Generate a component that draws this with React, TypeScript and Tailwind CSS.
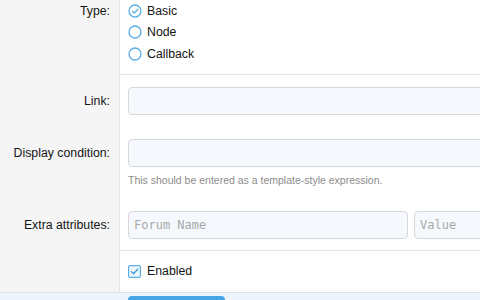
import React from "react";

const Radio = ({ checked }: { checked?: boolean }) => (
  <svg width="14" height="14" viewBox="0 0 14 14" className="shrink-0">
    <circle cx="7" cy="7" r="6" fill="white" stroke="#5aaee6" strokeWidth="1.3" />
    {checked && (
      <path d="M4.2 7.1 L6.2 9 L9.9 5.2" fill="none" stroke="#5aaee6" strokeWidth="1.3" strokeLinecap="round" strokeLinejoin="round" />
    )}
  </svg>
);

const Divider = () => (
  <div className="flex h-px shrink-0">
    <div className="w-[120px] bg-[#f5f5f5] border-r border-[#e4e4e4]" />
    <div className="flex-1 bg-[#e3e3e3]" />
  </div>
);

const mono = { fontFamily: '"DejaVu Sans Mono", "Liberation Mono", monospace', fontSize: 12 };

export default function App() {
  return (
    <div className="w-[480px] h-[300px] overflow-hidden bg-white flex flex-col" style={{ fontFamily: '"Liberation Sans", Arial, sans-serif' }}>
      {/* Type row */}
      <div className="flex h-[74px] shrink-0">
        <div className="w-[120px] shrink-0 bg-[#f5f5f5] border-r border-[#e4e4e4] pr-[9px] text-right text-[12.3px] text-[#141414] pt-[3px] leading-[16px]">Type:</div>
        <div className="flex-1 flex flex-col pl-2">
          {[
            { t: "Basic", c: true },
            { t: "Node" },
            { t: "Callback" },
          ].map((r) => (
            <div key={r.t} className="flex items-center gap-[5px] h-[21.5px] text-[12.3px] text-[#141414]">
              <Radio checked={r.c} />
              <span>{r.t}</span>
            </div>
          ))}
        </div>
      </div>
      <Divider />
      {/* Link / Display condition / Extra attributes */}
      <div className="flex h-[175px] shrink-0">
        <div className="w-[120px] shrink-0 bg-[#f5f5f5] border-r border-[#e4e4e4] pr-[9px] text-right text-[12.3px] text-[#141414] flex flex-col">
          <div className="mt-[18px] leading-[16px]">Link:</div>
          <div className="mt-[36px] leading-[16px]">Display condition:</div>
          <div className="mt-[56px] leading-[16px]">Extra attributes:</div>
        </div>
        <div className="flex-1 flex flex-col pl-2">
          <div className="mt-[12px] h-[28px] shrink-0 rounded-[4px] border border-[#d8d8d8] bg-[#f5f9fd] -mr-2" />
          <div className="mt-[24px] h-[28px] shrink-0 rounded-[4px] border border-[#d8d8d8] bg-[#f5f9fd] -mr-2" />
          <div className="mt-[7px] text-[10.5px] leading-[12px] text-[#8c8c8c] whitespace-nowrap">This should be entered as a template-style expression.</div>
          <div className="mt-[25px] flex gap-[6px] -mr-6">
            <div className="w-[280px] h-[28px] rounded-[4px] border border-[#d8d8d8] bg-[#f5f9fd] flex items-center px-[5px] text-[#a8a8a8]" style={mono}>Forum Name</div>
            <div className="flex-1 h-[28px] rounded-[4px] border border-[#d8d8d8] bg-[#f5f9fd] flex items-center px-[5px] text-[#a8a8a8]" style={mono}>Value</div>
          </div>
        </div>
      </div>
      <Divider />
      {/* Enabled */}
      <div className="flex h-[41px] shrink-0">
        <div className="w-[120px] shrink-0 bg-[#f5f5f5] border-r border-[#e4e4e4]" />
        <div className="flex-1 flex items-center gap-[6px] pl-2 text-[12.3px] text-[#141414]">
          <svg width="13" height="13" viewBox="0 0 13 13">
            <rect x="0.6" y="0.6" width="11.8" height="11.8" rx="1.5" fill="#eef6fd" stroke="#5aaee6" strokeWidth="1.2" />
            <path d="M3.3 6.6 L5.5 8.7 L9.7 4.3" fill="none" stroke="#3d94d6" strokeWidth="1.3" strokeLinecap="round" strokeLinejoin="round" />
          </svg>
          <span>Enabled</span>
        </div>
      </div>
      {/* Bottom bar */}
      <div className="h-[8px] shrink-0 border-t border-[#d8e2ec] bg-[#edf4fb] pl-[128px] pt-[3px]">
        <div className="w-[97px] h-[10px] rounded-t-[4px] bg-[#47a5e6]" />
      </div>
    </div>
  );
}
